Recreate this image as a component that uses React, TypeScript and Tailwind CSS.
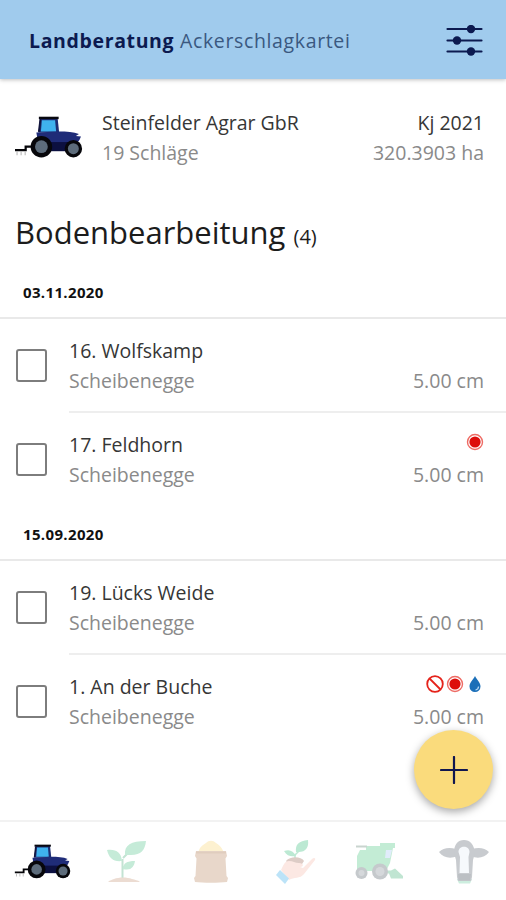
import React from 'react';

type Flag = 'blocked' | 'alert' | 'water';

interface Field {
  name: string;
  machine: string;
  depth: string;
  flags?: Flag[];
}

interface FieldGroup {
  date: string;
  fields: Field[];
}

const groups: FieldGroup[] = [
  {
    date: '03.11.2020',
    fields: [
      { name: '16. Wolfskamp', machine: 'Scheibenegge', depth: '5.00 cm' },
      { name: '17. Feldhorn', machine: 'Scheibenegge', depth: '5.00 cm', flags: ['alert'] },
    ],
  },
  {
    date: '15.09.2020',
    fields: [
      { name: '19. Lücks Weide', machine: 'Scheibenegge', depth: '5.00 cm' },
      { name: '1. An der Buche', machine: 'Scheibenegge', depth: '5.00 cm', flags: ['blocked', 'alert', 'water'] },
    ],
  },
];

const TractorIcon = ({ className }: { className: string }) => (
  <svg className={className} viewBox="0 0 68 42" fill="none">
    <path d="M1 34.500h10.500v-3.500h9" stroke="#050508" strokeWidth="2.200" />
    <path d="M3 35.500v4M7 35.500v4M11 35.500v4" stroke="#b3b3b3" strokeWidth="1" />
    <path d="M26 3h17l1.500 14H24z" fill="#1d2d73" />
    <path d="M27.500 5h13l1 11h-15z" fill="#3fb2ee" />
    <path d="M24.500 1.500h19.500v2.400H24.500z" fill="#08080f" />
    <path d="M26 3.500l-1.500 13" stroke="#10143c" strokeWidth="1.800" />
    <path d="M22 17l22-1c8 0 15 .5 20 2.500l-3 2 5 .5-1.500 3.500L62 28H24z" fill="#1f2c78" />
    <path d="M30 26.500h28v9H30z" fill="#0c1040" />
    <circle cx="27" cy="31" r="10.600" fill="#07070b" />
    <circle cx="27" cy="31" r="6.300" fill="#5d6c7b" />
    <circle cx="58.500" cy="33" r="8.600" fill="#07070b" />
    <circle cx="58.500" cy="33" r="5.400" fill="#5d6c7b" />
  </svg>
);

const SeedlingIcon = () => (
  <svg className="h-[44px] w-[42px]" viewBox="0 0 42 44" fill="none">
    <path d="M16.500 39V19M16.500 29l6-6M17 18l9-9" stroke="#c3e3d3" strokeWidth="2" />
    <path d="M19 15C18 5 25 1 40 1c-1 9-5 14-15 14z" fill="#c5ebd8" />
    <path d="M1 10c9-1 14 2 15 11C7 22 3 18 1 10z" fill="#c5ebd8" />
    <path d="M17 29c0-6 4-8 12-8-1 6-4 10-12 8z" fill="#c5ebd8" />
    <path d="M2 42c2-2 4-2 6-3 5-2 13-2 18 0 3 1 6 1 8 3z" fill="#ecdcd2" />
  </svg>
);

const SackIcon = () => (
  <svg className="h-[43px] w-[36px]" viewBox="0 0 36 43" fill="none">
    <path d="M5 13C7 6 10 5 13 3c3-3 7-3 10 0 3 2 6 4 8 10z" fill="#fdf1d0" />
    <path d="M3 11h30l1 5-1.500 2.500L33.500 36l1.500 2-1 4c-8 1-24 1-32 0l-1-4 1.500-2L3.500 18.500 2 16z" fill="#e8d7ca" />
    <path d="M3 12.500h30" stroke="#e0cdbe" strokeWidth="2" />
  </svg>
);

const HandIcon = () => (
  <svg className="h-[45px] w-[40px]" viewBox="0 0 40 45" fill="none">
    <path d="M19 19v-3l6-6" stroke="#bfe9d3" strokeWidth="1.500" />
    <path d="M20 13c-1-8 3-11 12-12 1 7-2 13-12 12z" fill="#bce9d3" />
    <path d="M8 12c6-2 9 0 12 5-5 1-9 0-12-5z" fill="#bce9d3" />
    <path d="M10 22c4-5 15-5 18 0l-2 3H12z" fill="#ddccc6" />
    <path d="M5 31c3-6 4-9 8-9 4 0 6 2 10 2 5 0 5 4 1 4l3 1 9-9c2-2 4-1 3 1L28 35c-4 5-10 3-15 6z" fill="#fce8e3" />
    <path d="M4 31l9 8.500-4 5.500-9-9z" fill="#bce3f8" />
  </svg>
);

const HarvesterIcon = () => (
  <svg className="h-[38px] w-[49px]" viewBox="0 0 49 38" fill="none">
    <path d="M11 4h14V1h15v5h-2l-3 15-4 8H2V14l3-6h6z" fill="#c3ecd5" />
    <path d="M1 4.500h11" stroke="#c9d4cf" strokeWidth="2" />
    <path d="M31 8h6l-2 8h-5z" fill="#e1ecfb" />
    <path d="M31 28.500h5l4-2 8 7.500v2.500H36l-2-5h-4z" fill="#c0e5d2" />
    <circle cx="6.500" cy="31" r="6" fill="#c5c9cc" />
    <circle cx="6.500" cy="31" r="3" fill="#d5d8db" />
    <circle cx="25" cy="29.500" r="8" fill="#c5c9cc" />
    <circle cx="25" cy="29.500" r="4.500" fill="#d5d8db" />
  </svg>
);

const CowIcon = () => (
  <svg className="h-[45px] w-[52px]" viewBox="0 0 52 45" fill="none">
    <path d="M19 40h15l-2 4.500H21z" fill="#cdeedf" />
    <path d="M18 10C11 8 5 9 1 13c4 6 12 7 18 4zM34 10c7-2 13-1 17 3-4 6-12 7-18 4z" fill="#c8cbcf" />
    <path d="M16 14C16 5 20 1 26 1s10 4 11 13l-2 7-1 17-1 4H20l-1-4-1-17z" fill="#c8cbcf" />
    <path d="M20.500 13c0-7 11-7 11 0l-1 5 .5 16h-9.500l.5-16z" fill="#f6f9fc" />
    <path d="M20 35h13l-1 6.500H20.500z" fill="#bcc0c4" />
  </svg>
);

const FlagIcon = ({ flag }: { flag: Flag }) => {
  if (flag === 'blocked') {
    return (
      <svg className="size-[18px]" viewBox="0 0 18 18" fill="none" stroke="#e5231b" strokeWidth="1.800">
        <circle cx="9" cy="9" r="7.800" />
        <path d="M3.500 3.500l11 11" />
      </svg>
    );
  }
  if (flag === 'alert') {
    return (
      <svg className="size-[18px]" viewBox="0 0 18 18" fill="none">
        <circle cx="9" cy="9" r="7.500" stroke="#ee6b64" strokeWidth="1.400" />
        <circle cx="9" cy="9" r="5.600" fill="#dd0d0a" />
      </svg>
    );
  }
  return (
    <svg className="size-[18px]" viewBox="0 0 18 18" fill="none">
      <path d="M9 1c2 4 5.500 6.500 5.500 10.500a5.500 5.500 0 0 1-11 0C3.500 7.500 7 5 9 1z" fill="#1b6fb8" />
      <path d="M12.500 11.500c0 2-1.300 3.200-3 3.500" stroke="#b7d8f2" strokeWidth="1.200" />
    </svg>
  );
};

const FieldRow = ({ field, last }: { field: Field; last: boolean }) => (
  <div className="flex h-[94px] pl-4">
    <div className="mt-[30px] h-[33px] w-[31px] shrink-0 rounded-[3px] border-2 border-[#7d7d7d]" />
    <div className={`ml-[22px] flex flex-1 justify-between pr-[22px] pt-[17px] leading-[29.500px] ${last ? '' : 'border-b-2 border-[#eeeeee]'}`}>
      <div>
        <p className="text-[#363636]">{field.name}</p>
        <p className="text-[#8a8a8a]">{field.machine}</p>
      </div>
      <div className="flex flex-col items-end">
        <div className="flex h-[29.500px] items-center gap-[2px] pb-[6px]">
          {field.flags?.map((flag) => <FlagIcon key={flag} flag={flag} />)}
        </div>
        <p className="text-[#8a8a8a]">{field.depth}</p>
      </div>
    </div>
  </div>
);

const App: React.FC = () => (
  <div className="relative flex h-[900px] w-[506px] flex-col overflow-hidden bg-white font-['Open_Sans',sans-serif] text-[19.500px]">
    <header className="flex h-[79px] shrink-0 items-center justify-between bg-[#a0cbed] pl-[29px] pr-[23px] pt-[3px] shadow-[0_1px_4px_rgba(0,0,0,0.25)]">
      <h1 className="tracking-[0.640px] text-[#3a5880]">
        <span className="font-bold text-[#0c1a50]">Landberatung</span> Ackerschlagkartei
      </h1>
      <svg className="h-[32px] w-[37px]" viewBox="0 0 37 32" fill="none" stroke="#0c1a50" strokeWidth="2.200" strokeLinecap="round">
        <path d="M1.500 4h34M1.500 15.500h34M1.500 26.500h34" />
        <g fill="#0c1a50" stroke="none">
          <circle cx="25" cy="4" r="4.200" />
          <circle cx="11" cy="15.500" r="4.200" />
          <circle cx="25" cy="26.500" r="4.200" />
        </g>
      </svg>
    </header>

    <section className="flex h-[123px] shrink-0 pl-[14px] pr-[22px] pt-[29px] leading-[29.500px]">
      <TractorIcon className="mt-[7px] h-[43px] w-[69px]" />
      <div className="ml-[19px] flex-1">
        <p className="text-[#363636]">Steinfelder Agrar GbR</p>
        <p className="text-[#8a8a8a]">19 Schläge</p>
      </div>
      <div className="text-right">
        <p className="text-[#363636]">Kj 2021</p>
        <p className="text-[#8a8a8a]">320.3903 ha</p>
      </div>
    </section>

    <h2 className="h-[63px] shrink-0 pl-[15px] text-[31px] leading-[60px] text-[#1c1c1c]">
      Bodenbearbeitung <span className="text-[20px]">(4)</span>
    </h2>

    <main className="flex-1">
      {groups.map((group) => (
        <section key={group.date}>
          <div className="flex h-[54px] items-center border-b-2 border-[#e9e9e9] pl-[23px] pt-[3px] text-[15px] font-bold tracking-[0.350px] text-[#111111]">
            {group.date}
          </div>
          {group.fields.map((field, index) => (
            <FieldRow key={field.name} field={field} last={index === group.fields.length - 1} />
          ))}
        </section>
      ))}
    </main>

    <nav className="flex h-[80px] shrink-0 items-start border-t-2 border-[#f2f2f2]">
      <div className="w-[84px] pl-[14px] pt-[21px]"><TractorIcon className="h-[36px] w-[57px]" /></div>
      <div className="w-[84px] pl-[22px] pt-[18px]"><SeedlingIcon /></div>
      <div className="w-[84px] pl-[25px] pt-[18px]"><SackIcon /></div>
      <div className="w-[84px] pl-[24px] pt-[17px]"><HandIcon /></div>
      <div className="w-[84px] pl-[19px] pt-[20px]"><HarvesterIcon /></div>
      <div className="flex-1 pl-[18px] pt-[17px]"><CowIcon /></div>
    </nav>

    <button className="absolute right-[13px] top-[730px] flex size-[79px] items-center justify-center rounded-full bg-[#fadb7c] shadow-[0_3px_8px_rgba(0,0,0,0.35)]">
      <svg className="size-[28px]" viewBox="0 0 28 28" stroke="#10164f" strokeWidth="2.200" strokeLinecap="round">
        <path d="M14 1v26M1 14h26" />
      </svg>
    </button>
  </div>
);

export default App;
